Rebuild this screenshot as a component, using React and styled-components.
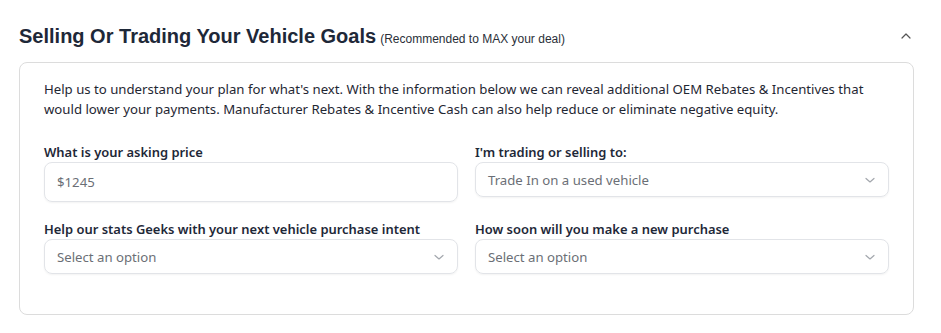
import { createGlobalStyle } from "styled-components";
import styled from "styled-components";

const GlobalStyle = createGlobalStyle`
  body {
    margin: 0;
    background: #ffffff;
    font-family: "Noto Sans", "Open Sans", sans-serif;
  }
`;

const Section = styled.section`
  width: 941px;
  padding: 20px 20px 0 19px;
  box-sizing: border-box;
`;

const Header = styled.div`
  height: 32px;
  display: flex;
  align-items: center;
  justify-content: space-between;
  margin-bottom: 10px;
`;

const Title = styled.h2`
  margin: 0;
  font-family: "Liberation Sans", Arial, sans-serif;
  font-size: 20px;
  font-weight: 700;
  color: #1e2838;
  display: flex;
  align-items: baseline;
  gap: 4px;
`;

const SubTitle = styled.span`
  font-size: 12px;
  font-weight: 400;
  color: #2a2f38;
`;

const Toggle = styled.button`
  border: none;
  background: none;
  padding: 0;
  width: 14px;
  height: 14px;
  display: flex;
  align-items: center;
  justify-content: center;
  margin-right: 8px;
  cursor: pointer;
`;

const Card = styled.div`
  width: 895px;
  box-sizing: border-box;
  border: 1px solid #dcdcdc;
  border-radius: 8px;
  padding: 16px 24px 40px 24px;
`;

const Intro = styled.p`
  margin: 0 0 24px 0;
  font-size: 13.2px;
  line-height: 20px;
  color: #1f2733;
`;

const FormGrid = styled.div`
  display: grid;
  grid-template-columns: 1fr 1fr;
  column-gap: 17px;
  row-gap: 18px;
  align-items: start;
`;

const Field = styled.div`
  display: flex;
  flex-direction: column;
  gap: 1px;
`;

const Label = styled.label`
  font-size: 12.95px;
  font-weight: 600;
  line-height: 18px;
  color: #1e2838;
`;

const Box = styled.div`
  height: ${(props) => (props.tall ? "40px" : "35px")};
  box-sizing: border-box;
  border: 1px solid #e2e4e8;
  border-radius: 8px;
  box-shadow: 0 1px 2px rgba(0, 0, 0, 0.05);
  padding: 0 12px;
  display: flex;
  align-items: center;
  justify-content: space-between;
  font-size: 13.2px;
  color: #6b6f76;
`;

const Chevron = ({ up }) => (
  <svg width="12" height="12" viewBox="0 0 12 12" fill="none">
    <path
      d={up ? "M2 8 L6 4 L10 8" : "M2 4.5 L6 8 L10 4.5"}
      stroke={up ? "#555" : "#a3a7ad"}
      strokeWidth="1.2"
      strokeLinecap="round"
      strokeLinejoin="round"
    />
  </svg>
);

const SelectBox = ({ value }) => (
  <Box>
    <span>{value}</span>
    <Chevron />
  </Box>
);

export default function App() {
  return (
    <>
      <GlobalStyle />
      <Section>
        <Header>
          <Title>
            Selling Or Trading Your Vehicle Goals
            <SubTitle>(Recommended to MAX your deal)</SubTitle>
          </Title>
          <Toggle>
            <Chevron up />
          </Toggle>
        </Header>
        <Card>
          <Intro>
            Help us to understand your plan for what's next. With the
            information below we can reveal additional OEM Rebates &amp;
            Incentives that would lower your payments. Manufacturer Rebates
            &amp; Incentive Cash can also help reduce or eliminate negative
            equity.
          </Intro>
          <FormGrid>
            <Field>
              <Label>What is your asking price</Label>
              <Box tall>$1245</Box>
            </Field>
            <Field>
              <Label>I'm trading or selling to:</Label>
              <SelectBox value="Trade In on a used vehicle" />
            </Field>
            <Field>
              <Label>Help our stats Geeks with your next vehicle purchase intent</Label>
              <SelectBox value="Select an option" />
            </Field>
            <Field>
              <Label>How soon will you make a new purchase</Label>
              <SelectBox value="Select an option" />
            </Field>
          </FormGrid>
        </Card>
      </Section>
    </>
  );
}
